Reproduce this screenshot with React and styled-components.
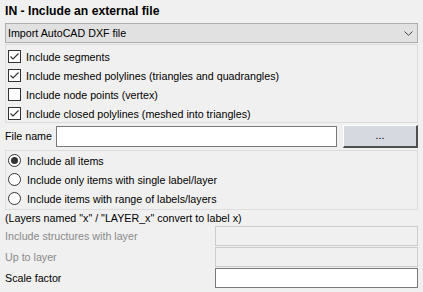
import React, { useState } from "react";
import styled, { createGlobalStyle } from "styled-components";

const GlobalStyle = createGlobalStyle`
  body {
    margin: 0;
    background: #f0f0f0;
    font-family: "Liberation Sans", Arial, sans-serif;
    font-size: 10.7px;
    color: #000;
  }
`;

const Page = styled.div`
  width: 423px;
  box-sizing: border-box;
  padding: 0 5px;
  display: flex;
  flex-direction: column;
`;

const Title = styled.div`
  height: 23px;
  line-height: 22px;
  font-size: 12.2px;
  font-weight: bold;
`;

const Select = styled.div`
  height: 20px;
  box-sizing: border-box;
  border: 1px solid #adadad;
  background: #e1e1e1;
  display: flex;
  align-items: center;
  justify-content: space-between;
  padding: 0 4px 0 2px;
`;

const Panel = styled.div`
  margin-top: 1px;
  height: ${(p) => p.$height}px;
  box-sizing: border-box;
  border: 1px solid #dcdcdc;
  padding: ${(p) => p.$padTop}px 0 0 2px;
  display: flex;
  flex-direction: column;
`;

const OptionRow = styled.label`
  height: 19px;
  flex: none;
  display: flex;
  align-items: center;
  gap: ${(p) => p.$gap}px;
  white-space: nowrap;
  cursor: default;
`;

const Box = styled.span`
  width: 13px;
  height: 13px;
  box-sizing: border-box;
  border: 1px solid #333;
  background: #fff;
  display: flex;
  align-items: center;
  justify-content: center;
  flex: none;
`;

const Radio = styled.span`
  width: 13px;
  height: 13px;
  box-sizing: border-box;
  border: 1px solid #333;
  border-radius: 50%;
  background: #fff;
  display: flex;
  align-items: center;
  justify-content: center;
  flex: none;

  &::after {
    content: "";
    width: 7px;
    height: 7px;
    border-radius: 50%;
    background: ${(p) => (p.$on ? "#333" : "transparent")};
  }
`;

const FileRow = styled.div`
  height: 26px;
  display: flex;
  align-items: center;
`;

const FileLabel = styled.span`
  width: 51px;
  flex: none;
`;

const Input = styled.div`
  height: ${(p) => p.$h || 20}px;
  box-sizing: border-box;
  border: 1px solid ${(p) => (p.$disabled ? "#cccccc" : "#7a7a7a")};
  background: ${(p) => (p.$disabled ? "#f0f0f0" : "#fff")};
`;

const FileInput = styled(Input)`
  width: 281px;
  flex: none;
`;

const BrowseButton = styled.div`
  margin-left: 6px;
  width: 75px;
  height: 23px;
  box-sizing: border-box;
  background: #d6d9e0;
  border-top: 1px solid #fff;
  border-left: 1px solid #fff;
  border-right: 2px solid #505050;
  border-bottom: 2px solid #505050;
  display: flex;
  align-items: center;
  justify-content: center;
  padding-bottom: 1px;
  flex: none;
`;

const Note = styled.div`
  height: 16px;
  line-height: 16px;
`;

const FieldRow = styled.div`
  height: 20px;
  margin-bottom: 1px;
  display: flex;
  align-items: center;
`;

const FieldLabel = styled.span`
  width: 210px;
  flex: none;
  color: ${(p) => (p.$disabled ? "#8a8a8a" : "#000")};
`;

const FieldInput = styled(Input)`
  flex: 1;
`;

const Check = ({ on }) => (
  <Box>
    {on && (
      <svg width="11" height="11" viewBox="0 0 11 11">
        <polyline points="1.5,5.5 4,8 9.5,2.5" fill="none" stroke="#333" strokeWidth="1.2" />
      </svg>
    )}
  </Box>
);

const checks = [
  ["Include segments", true],
  ["Include meshed polylines (triangles and quadrangles)", true],
  ["Include node points (vertex)", false],
  ["Include closed polylines (meshed into triangles)", true],
];

const radios = [
  "Include all items",
  "Include only items with single label/layer",
  "Include items with range of labels/layers",
];

function App() {
  const [mode] = useState(0);

  return (
    <Page>
      <GlobalStyle />
      <Title>IN - Include an external file</Title>
      <Select>
        <span>Import AutoCAD DXF file</span>
        <svg width="9" height="5" viewBox="0 0 9 5">
          <polyline points="0.5,0.5 4.5,4.3 8.5,0.5" fill="none" stroke="#444" strokeWidth="1" />
        </svg>
      </Select>
      <Panel $height={79} $padTop={2}>
        {checks.map(([text, on]) => (
          <OptionRow key={text} $gap={5}>
            <Check on={on} />
            {text}
          </OptionRow>
        ))}
      </Panel>
      <FileRow>
        <FileLabel>File name</FileLabel>
        <FileInput $h={21} />
        <BrowseButton>...</BrowseButton>
      </FileRow>
      <Panel $height={60} $padTop={0}>
        {radios.map((text, i) => (
          <OptionRow key={text} $gap={6}>
            <Radio $on={i === mode} />
            {text}
          </OptionRow>
        ))}
      </Panel>
      <Note>(Layers named "x" / "LAYER_x" convert to label x)</Note>
      <FieldRow>
        <FieldLabel $disabled>Include structures with layer</FieldLabel>
        <FieldInput $disabled />
      </FieldRow>
      <FieldRow>
        <FieldLabel $disabled>Up to layer</FieldLabel>
        <FieldInput $disabled />
      </FieldRow>
      <FieldRow>
        <FieldLabel>Scale factor</FieldLabel>
        <FieldInput />
      </FieldRow>
    </Page>
  );
}

export default App;
